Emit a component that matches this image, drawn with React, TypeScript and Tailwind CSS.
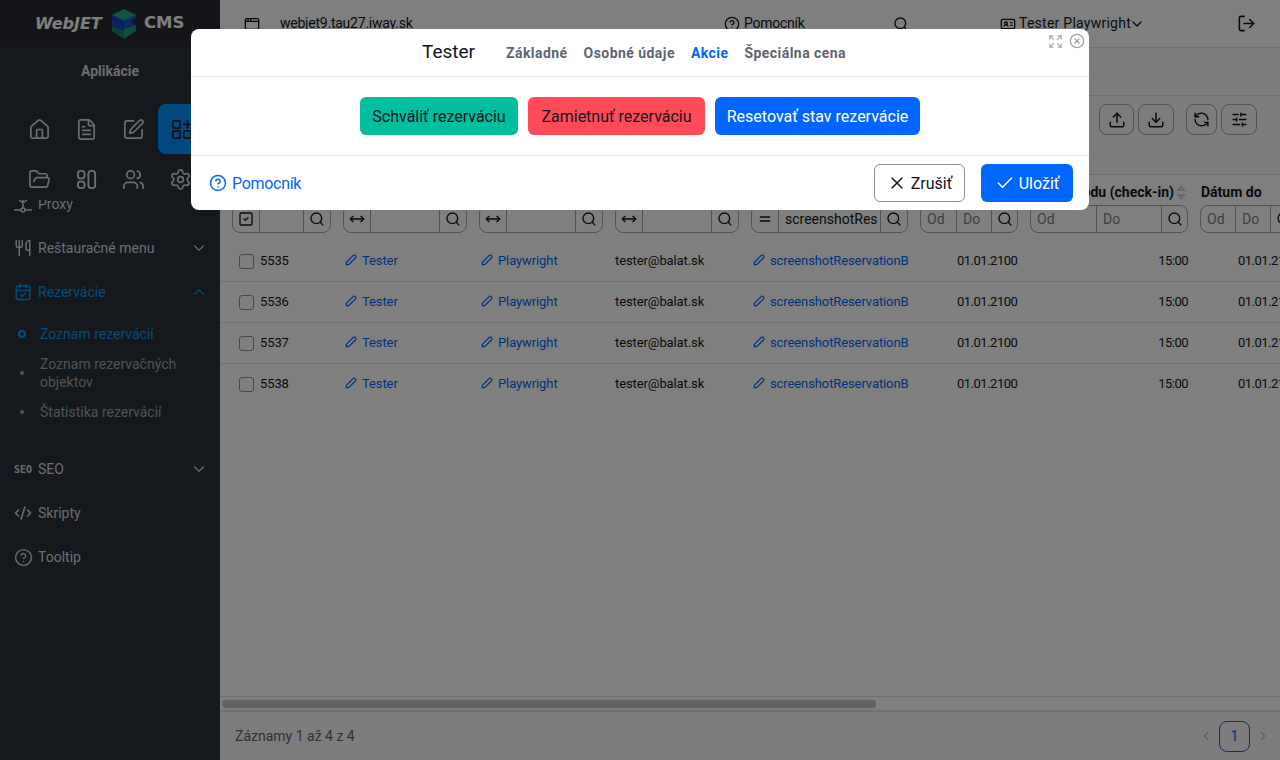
import React from "react";
import { Home, FileText, SquarePen, FolderOpen, Users, Settings, Utensils, CalendarCheck, ChevronDown, ChevronUp, CodeXml, CircleHelp, Search, Upload, Download, RefreshCcw, SlidersHorizontal, LogOut, X, Check, ChevronLeft, ChevronRight, MoveHorizontal, Equal, SquareCheck, AppWindow, IdCard, Expand, CircleX } from "lucide-react";

const F = "font-['Roboto','Noto_Sans',sans-serif]";

function Logo() {
  return (
    <div className="flex items-center pl-[35px] w-full font-['DejaVu_Sans',sans-serif]">
      <span className="w-[76px] text-[16px] font-bold italic text-white whitespace-nowrap">WebJET</span>
      <svg width="26" height="30" viewBox="0 0 26 30" className="shrink-0">
        <polygon points="13,0 25,6 13,12 1,6" fill="#23a585" />
        <polygon points="1,6 13,12 13,16 1,11" fill="#0b3fd8" />
        <polygon points="25,6 25,9 19,13 25,16 13,20 13,12" fill="#1554c0" />
        <polygon points="1,11 13,16 13,22 1,17" fill="#0d46c8" />
        <polygon points="25,16 25,22 13,30 13,20" fill="#1f9a7a" />
        <polygon points="1,17 13,22 13,30 1,22" fill="#1a8070" />
      </svg>
      <span className="ml-[7px] text-[16.5px] font-bold text-white whitespace-nowrap">CMS</span>
    </div>
  );
}

function Apps({ className }: { className?: string }) {
  return (
    <svg className={className} width="22" height="22" viewBox="0 0 24 24" fill="none" stroke="currentColor" strokeWidth="2" strokeLinecap="round" strokeLinejoin="round">
      <rect x="2" y="3" width="8" height="8" rx="1.5" />
      <rect x="2" y="14" width="8" height="8" rx="1.5" />
      <rect x="14" y="14" width="8" height="8" rx="1.5" />
      <path d="M14 7h8M18 3v8" />
    </svg>
  );
}

function Layout2() {
  return (
    <svg width="23" height="23" viewBox="0 0 24 24" fill="none" stroke="currentColor" strokeWidth="2" strokeLinecap="round" strokeLinejoin="round">
      <rect x="3" y="3" width="7" height="8" rx="3" />
      <rect x="3" y="14" width="7" height="7" rx="3" />
      <rect x="14" y="3" width="7" height="18" rx="3" />
    </svg>
  );
}

function ProxyIcon() {
  return (
    <svg width="18" height="18" viewBox="0 0 18 18" fill="none" stroke="currentColor" strokeWidth="1.5" strokeLinecap="round">
      <path d="M0.5 15h6M11.5 15h6M9 5v7.5M3 3l6 5 6-5" />
      <circle cx="9" cy="15" r="2" />
    </svg>
  );
}

function PencilIcon() {
  return (
    <svg width="14" height="14" viewBox="0 0 24 24" fill="none" stroke="currentColor" strokeWidth="2.2" strokeLinecap="round" strokeLinejoin="round" className="mr-[4px] shrink-0 -translate-y-[1px]">
      <path d="M4 20h4l11.5-11.5a2.83 2.83 0 1 0-4-4L4 16v4" />
    </svg>
  );
}

function MenuRow({ icon, label, chevron, active }: { icon: React.ReactNode; label: string; chevron?: "up" | "down"; active?: boolean }) {
  return (
    <div className={`flex h-[44px] shrink-0 items-center pl-[13px] pr-[12px] text-[14px] ${active ? "text-[#0d95f5]" : "text-[#d8dbe0]"}`}>
      <span className="flex w-[20px] justify-center">{icon}</span>
      <span className="ml-[5px] flex-1">{label}</span>
      {chevron === "down" && <ChevronDown size={18} strokeWidth={1.5} />}
      {chevron === "up" && <ChevronUp size={18} strokeWidth={1.5} />}
    </div>
  );
}

function SubRow({ label, active, tall }: { label: string; active?: boolean; tall?: boolean }) {
  return (
    <div className={`flex shrink-0 items-center text-[14px] ${tall ? "h-[48px] leading-[18px]" : "h-[30px]"} ${active ? "text-[#0d95f5]" : "text-[#a0a4ab]"}`}>
      <span className="flex w-[40px] justify-center pl-[4px]">
        {active ? <span className="h-[8px] w-[8px] rounded-full border-2 border-[#0d95f5]" /> : <span className="h-[4px] w-[4px] rounded-full bg-[#a0a4ab]" />}
      </span>
      <span className="w-[150px]">{label}</span>
    </div>
  );
}

function Sidebar() {
  const ic = "flex h-[50px] w-[40px] items-center justify-center";
  return (
    <aside className="flex h-full w-[220px] shrink-0 flex-col overflow-hidden bg-[#2b3038]">
      <div className="flex h-[47px] shrink-0 items-center bg-[#262a33]"><Logo /></div>
      <div className="flex h-[47px] shrink-0 items-center justify-center pt-[2px] text-[14px] font-bold text-[#d8dbe0]">Aplikácie</div>
      <div className="relative z-10 grid h-[106px] shrink-0 grid-cols-[repeat(4,40px)] gap-x-[7px] bg-[#2b3038] pl-[19px] pt-[10px] text-[#d8dbe0]">
        <div className={ic}><Home size={23} strokeWidth={1.75} /></div>
        <div className={ic}><FileText size={23} strokeWidth={1.75} /></div>
        <div className={ic}><SquarePen size={23} strokeWidth={1.75} /></div>
        <div className="-ml-[2px] flex h-[50px] w-[62px] items-center rounded-l-[8px] bg-[#0095ff] pl-[13px] text-[#20242b]"><Apps /></div>
        <div className={ic}><FolderOpen size={23} strokeWidth={1.75} /></div>
        <div className={ic}><Layout2 /></div>
        <div className={ic}><Users size={23} strokeWidth={1.75} /></div>
        <div className={ic}><Settings size={23} strokeWidth={1.75} /></div>
      </div>
      <div className="-mt-[18px]">
        <MenuRow icon={<ProxyIcon />} label="Proxy" />
      </div>
      <MenuRow icon={<Utensils size={18} />} label="Reštauračné menu" chevron="down" />
      <MenuRow icon={<CalendarCheck size={18} />} label="Rezervácie" chevron="up" active />
      <div className="mt-[5px]">
        <SubRow label="Zoznam rezervácií" active />
        <SubRow label="Zoznam rezervačných objektov" tall />
        <SubRow label="Štatistika rezervácií" />
      </div>
      <div className="h-[20px] shrink-0" />
      <MenuRow icon={<span className="font-['DejaVu_Sans_Mono',monospace] text-[10px] font-bold">SEO</span>} label="SEO" chevron="down" />
      <MenuRow icon={<CodeXml size={18} />} label="Skripty" />
      <MenuRow icon={<CircleHelp size={19} strokeWidth={1.75} />} label="Tooltip" />
    </aside>
  );
}

function TopBar() {
  return (
    <header className="flex h-[48px] shrink-0 items-center border-b border-[#dfe1e6] text-[14px] text-[#13151a]">
      <AppWindow size={16} className="ml-[24px]" />
      <span className="ml-[20px] w-[444px] tracking-[-0.23px]">webjet9.tau27.iway.sk</span>
      <CircleHelp size={16} />
      <span className="ml-[4px] w-[149px] tracking-[-0.25px]">Pomocník</span>
      <Search size={16} />
      <IdCard size={16} className="ml-[91px]" />
      <span className="ml-[3px] w-[110px] whitespace-nowrap tracking-[0.25px]">Tester Playwright</span>
      <ChevronDown size={16} />
      <LogOut size={19} className="ml-[92px]" />
    </header>
  );
}

function TBtn({ children, w }: { children: React.ReactNode; w: string }) {
  return <div className={`flex h-[31px] items-center justify-center rounded-[8px] border border-[#a0a6b2] text-[#13151a] ${w}`}>{children}</div>;
}

function FilterBox({ w, left, value, od }: { w: string; left?: React.ReactNode; value?: string; od?: [string, string] }) {
  return (
    <div className={`flex h-[28px] shrink-0 items-stretch rounded-[8px] border border-[#a0a6b2] text-[14px] ${w}`}>
      {left && <span className="flex w-[27px] shrink-0 items-center justify-center border-r border-[#a0a6b2]">{left}</span>}
      {od ? (
        <>
          <span className={`flex items-center border-r border-[#a0a6b2] pl-[6px] text-[#7e838c] ${od[0]}`}>Od</span>
          <span className={`flex items-center border-r border-[#a0a6b2] pl-[6px] text-[#7e838c] ${od[1]}`}>Do</span>
        </>
      ) : (
        <span className="flex-1 overflow-hidden pl-[6px] leading-[26px]">{value}</span>
      )}
      <span className={`flex shrink-0 items-center justify-center ${od ? "flex-1" : "w-[27px] border-l border-[#a0a6b2]"}`}><Search size={16} /></span>
    </div>
  );
}

function Cell({ w, children, cls }: { w: string; children: React.ReactNode; cls?: string }) {
  return <div className={`flex shrink-0 items-center ${w} ${cls ?? ""}`}>{children}</div>;
}

function LinkCell({ w, label }: { w: string; label: string }) {
  return (
    <Cell w={w} cls="text-[#0066ff]">
      <PencilIcon />
      <span>{label}</span>
    </Cell>
  );
}

function Row({ id, last }: { id: string; last?: boolean }) {
  return (
    <div className={`flex h-[41px] items-center overflow-hidden border-b pl-[19px] text-[13px] tracking-[-0.1px] text-[#13151a] ${last ? "border-transparent" : "border-[#dfe1e6]"}`}>
      <Cell w="w-[105px]">
        <span className="mr-[6px] h-[15px] w-[15px] rounded-[3px] border border-[#8a90a0]" />
        {id}
      </Cell>
      <LinkCell w="w-[136px]" label="Tester" />
      <LinkCell w="w-[135px]" label="Playwright" />
      <Cell w="w-[137px]">tester@balat.sk</Cell>
      <LinkCell w="w-[205px]" label="screenshotReservationB" />
      <Cell w="w-[100px]" cls="tracking-[-0.5px]">01.01.2100</Cell>
      <Cell w="w-[131px]" cls="justify-end tracking-[-0.5px]">15:00</Cell>
      <Cell w="w-[150px]" cls="pl-[50px] whitespace-nowrap tracking-[-0.5px]">01.01.2100</Cell>
    </div>
  );
}

function Main() {
  return (
    <main className="flex h-full min-w-0 flex-1 flex-col overflow-hidden bg-white">
      <TopBar />
      <div className="h-[48px] shrink-0 border-b border-[#dfe1e6] bg-[#f8f8fa]" />
      <div className="flex h-[79px] shrink-0 justify-end gap-[4px] border-b border-[#dfe1e6] bg-[#f8f8fa] pr-[23px] pt-[8px]">
        <TBtn w="w-[35px]"><Upload size={18} /></TBtn>
        <TBtn w="w-[36px]"><Download size={18} /></TBtn>
        <TBtn w="w-[31px] ml-[8px]"><RefreshCcw size={17} /></TBtn>
        <TBtn w="w-[36px]"><SlidersHorizontal size={17} /></TBtn>
      </div>
      <div className="flex h-[30px] shrink-0 items-center justify-end whitespace-nowrap pt-[4px] text-[14px] font-bold text-[#13151a]">
        <span>Čas príchodu (check-in)</span>
        <span className="ml-[2px] flex w-[10px] flex-col items-center gap-[3px]">
          <span className="h-0 w-0 border-x-[5px] border-b-[6px] border-x-transparent border-b-[#d0d3d9]" />
          <span className="h-0 w-0 border-x-[5px] border-t-[6px] border-x-transparent border-t-[#d0d3d9]" />
        </span>
        <span className="ml-[15px] w-[79px]">Dátum do</span>
      </div>
      <div className="flex h-[28px] shrink-0 gap-[12px] overflow-hidden pl-[12px] text-[#13151a]">
        <FilterBox w="w-[99px]" left={<SquareCheck size={16} />} />
        <FilterBox w="w-[124px]" left={<MoveHorizontal size={16} />} />
        <FilterBox w="w-[124px]" left={<MoveHorizontal size={16} />} />
        <FilterBox w="w-[124px]" left={<MoveHorizontal size={16} />} />
        <FilterBox w="w-[157px]" left={<Equal size={16} />} value="screenshotRes" />
        <FilterBox w="w-[98px]" od={["w-[36px]", "w-[35px]"]} />
        <FilterBox w="w-[158px]" od={["w-[66px]", "w-[65px]"]} />
        <FilterBox w="w-[98px]" od={["w-[35px]", "w-[35px]"]} />
      </div>
      <div className="h-[8px] shrink-0" />
      <div className="shrink-0">
        {["5535", "5536", "5537", "5538"].map((id, i) => <Row key={id} id={id} last={i === 3} />)}
      </div>
      <div className="flex-1 border-b border-[#dfe1e6]" />
      <div className="flex h-[15px] shrink-0 items-center border-b-2 border-[#dfe1e6] px-[2px]">
        <div className="h-[8px] w-[654px] rounded-full bg-[#c4c4c4]" />
      </div>
      <footer className="flex h-[48px] shrink-0 items-center bg-[#f8f8fa] pl-[15px] pr-[10px] text-[14px] text-[#5e6470]">
        <span className="flex-1">Záznamy 1 až 4 z 4</span>
        <ChevronLeft size={14} className="text-[#bfc3cb]" />
        <span className="mx-[6px] flex h-[31px] w-[31px] items-center justify-center rounded-[8px] border border-[#0066ff] text-[#0066ff]">1</span>
        <ChevronRight size={14} className="text-[#bfc3cb]" />
      </footer>
    </main>
  );
}

function Modal() {
  return (
    <div className="absolute left-[191px] top-[29px] z-30 w-[898px] rounded-[8px] bg-white">
      <div className="absolute right-[4px] top-[4px] flex items-center gap-[6px] text-[#a0a6b2]">
        <Expand size={15} />
        <CircleX size={16} />
      </div>
      <div className="flex h-[48px] items-center border-b border-[#e3e5ea] pl-[231px]">
        <span className="w-[84px] text-[19px] text-[#13151a]">Tester</span>
        <div className="flex gap-[16px] pt-[1px] text-[14px] font-bold tracking-[0.45px]">
          <span className="text-[#5e6470]">Základné</span>
          <span className="text-[#5e6470]">Osobné údaje</span>
          <span className="text-[#0066ff]">Akcie</span>
          <span className="text-[#5e6470]">Špeciálna cena</span>
        </div>
      </div>
      <div className="flex h-[79px] items-center justify-center gap-[10px] border-b border-[#e3e5ea] text-[16px]">
        <span className="flex h-[38px] w-[158px] items-center justify-center rounded-[6px] bg-[#00be9e] pt-[1px] text-[#13151a]">Schváliť rezerváciu</span>
        <span className="flex h-[38px] w-[177px] items-center justify-center rounded-[6px] bg-[#ff4b58] pt-[1px] text-[#13151a]">Zamietnuť rezerváciu</span>
        <span className="flex h-[38px] w-[205px] items-center justify-center rounded-[6px] bg-[#0066ff] pt-[1px] text-white">Resetovať stav rezervácie</span>
      </div>
      <div className="flex h-[54px] items-center pl-[18px] pr-[16px] text-[16px]">
        <CircleHelp size={18} className="text-[#0066ff]" />
        <span className="ml-[5px] flex-1 pt-[1px] tracking-[-0.3px] text-[#0066ff]">Pomocník</span>
        <span className="flex h-[38px] w-[91px] items-center justify-center gap-[4px] rounded-[6px] border border-[#8a90a0] text-[#13151a]"><X size={20} strokeWidth={1.75} /><span className="pt-[1px]">Zrušiť</span></span>
        <span className="ml-[16px] flex h-[38px] w-[92px] items-center justify-center gap-[4px] rounded-[6px] bg-[#0066ff] text-white"><Check size={20} strokeWidth={1.75} /><span className="pt-[1px]">Uložiť</span></span>
      </div>
    </div>
  );
}

export default function App() {
  return (
    <div className={`relative flex h-[760px] w-[1280px] overflow-hidden ${F}`}>
      <Sidebar />
      <Main />
      <div className="absolute inset-0 z-20 bg-black/50" />
      <Modal />
    </div>
  );
}
